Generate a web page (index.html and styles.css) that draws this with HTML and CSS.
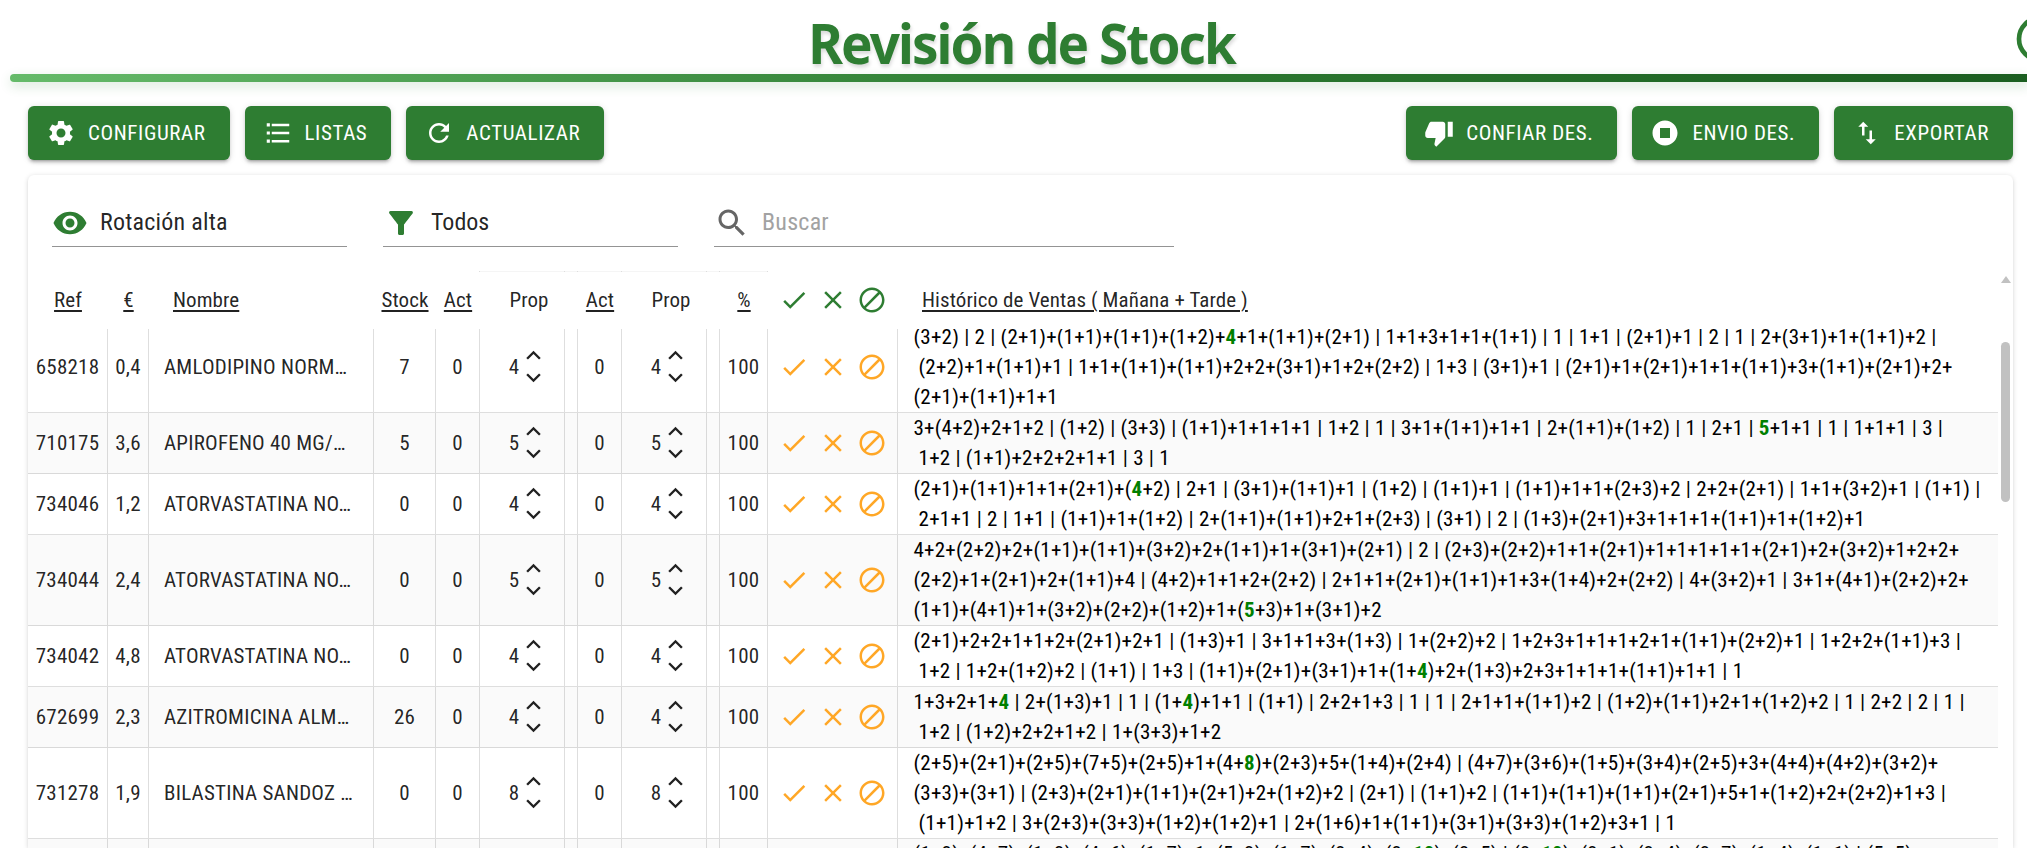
FILE: index.html
```html
<!DOCTYPE html>
<html lang="es">
<head>
    <meta charset="UTF-8">
    <meta name="viewport" content="width=device-width, initial-scale=1.0">
    <title>Revisión de Stock</title>
    <link rel="stylesheet" href="styles.css">
</head>
<body>
    <svg class="sprite">
        <symbol id="check" viewBox="0 0 24 24"><path d="M9 16.17 4.83 12l-1.42 1.41L9 19 21 7l-1.41-1.41z"/></symbol>
        <symbol id="clear" viewBox="0 0 24 24"><path d="M19 6.41 17.59 5 12 10.59 6.41 5 5 6.41 10.59 12 5 17.59 6.41 19 12 13.41 17.59 19 19 17.59 13.41 12z"/></symbol>
        <symbol id="block" viewBox="0 0 24 24"><path d="M12 2C6.5 2 2 6.5 2 12s4.500 10 10 10 10-4.500 10-10S17.500 2 12 2zM4 12c0-4.400 3.600-8 8-8 1.850 0 3.550.63 4.900 1.690L5.690 16.900C4.630 15.550 4 13.850 4 12zm8 8c-1.850 0-3.550-.63-4.900-1.690L18.310 7.100C19.370 8.450 20 10.150 20 12c0 4.400-3.600 8-8 8z"/></symbol>
        <symbol id="up" viewBox="0 0 24 24"><path d="M7.410 15.410 12 10.830l4.590 4.580L18 14l-6-6-6 6z"/></symbol>
        <symbol id="down" viewBox="0 0 24 24"><path d="M7.410 8.590 12 13.170l4.590-4.580L18 10l-6 6-6-6z"/></symbol>
    </svg>

    <header class="header">
        <h1>Revisión de Stock</h1>
        <svg class="help" viewBox="0 0 24 24"><circle cx="12" cy="12" r="9"/></svg>
    </header>
    <div class="bar"></div>

    <main class="content">
        <div class="toolbar">
            <button class="btn"><svg viewBox="0 0 24 24"><path d="M19.140 12.940c.04-.3.06-.61.06-.94 0-.32-.02-.64-.07-.94l2.030-1.580c.18-.14.23-.41.12-.61l-1.920-3.320c-.12-.22-.37-.29-.59-.22l-2.390.96c-.5-.38-1.030-.7-1.620-.94l-.36-2.540c-.04-.24-.24-.41-.48-.41h-3.840c-.24 0-.43.17-.47.41l-.36 2.540c-.59.24-1.130.57-1.620.94l-2.390-.96c-.22-.08-.47 0-.59.22L2.740 8.870c-.12.21-.08.47.12.61l2.030 1.580c-.05.3-.09.63-.09.94s.02.64.07.94l-2.030 1.580c-.18.14-.23.41-.12.61l1.920 3.320c.12.22.37.29.59.22l2.390-.96c.5.38 1.030.7 1.620.94l.36 2.540c.05.24.24.41.48.41h3.840c.24 0 .44-.17.47-.41l.36-2.540c.59-.24 1.130-.56 1.620-.94l2.390.96c.22.08.47 0 .59-.22l1.920-3.320c.12-.22.07-.47-.12-.61l-2.010-1.580zM12 15.600c-1.980 0-3.600-1.620-3.600-3.600s1.620-3.600 3.600-3.600 3.600 1.620 3.600 3.600-1.620 3.600-3.600 3.600z"/></svg>CONFIGURAR</button>
            <button class="btn"><svg viewBox="0 0 24 24"><path d="M3 10.750h2.500v2.500H3zM3 4.250h2.500v2.500H3zM3 17.250h2.500v2.500H3zM7 4.500h14v2H7zM7 11h14v2H7zM7 17.500h14v2H7z"/></svg>LISTAS</button>
            <button class="btn"><svg viewBox="0 0 24 24"><path d="M17.650 6.350C16.200 4.900 14.210 4 12 4c-4.420 0-7.990 3.580-7.990 8s3.570 8 7.990 8c3.730 0 6.840-2.550 7.730-6h-2.080c-.82 2.330-3.040 4-5.650 4-3.310 0-6-2.690-6-6s2.690-6 6-6c1.660 0 3.140.69 4.220 1.780L13 11h7V4l-2.350 2.350z"/></svg>ACTUALIZAR</button>
            <span class="spacer"></span>
            <button class="btn"><svg viewBox="0 0 24 24"><path d="M15 3H6c-.83 0-1.540.5-1.840 1.220l-3.020 7.050c-.09.23-.14.47-.14.73v2c0 1.100.9 2 2 2h6.310l-.95 4.570-.03.32c0 .41.17.79.44 1.060L9.830 23l6.590-6.590c.36-.36.58-.86.58-1.410V5c0-1.100-.9-2-2-2zm4 0v12h4V3h-4z"/></svg>CONFIAR DES.</button>
            <button class="btn"><svg viewBox="0 0 24 24"><path d="M12 2C6.480 2 2 6.480 2 12s4.480 10 10 10 10-4.480 10-10S17.520 2 12 2zm4 14H8V8h8v8z"/></svg>ENVIO DES.</button>
            <button class="btn"><svg viewBox="0 0 24 24"><path d="M16 17.010V10h-2v7.010h-3L15 21l4-3.990h-3zM9 3 5 6.990h3V14h2V6.990h3L9 3z"/></svg>EXPORTAR</button>
        </div>

        <section class="card">
            <div class="filters">
                <div class="field">
                    <svg viewBox="0 0 24 24"><path d="M12 4.500C7 4.500 2.730 7.610 1 12c1.730 4.390 6 7.500 11 7.500s9.270-3.110 11-7.500c-1.730-4.390-6-7.500-11-7.500zM12 17c-2.760 0-5-2.240-5-5s2.240-5 5-5 5 2.240 5 5-2.240 5-5 5zm0-8c-1.660 0-3 1.340-3 3s1.340 3 3 3 3-1.340 3-3-1.340-3-3-3z"/></svg>
                    <span>Rotación alta</span>
                </div>
                <div class="field">
                    <svg viewBox="0 0 24 24"><path d="M4.250 5.610C6.270 8.200 10 13 10 13v6c0 .55.45 1 1 1h2c.55 0 1-.45 1-1v-6s3.720-4.800 5.740-7.390c.51-.66.04-1.610-.79-1.610H5.040c-.83 0-1.300.95-.79 1.610z"/></svg>
                    <span>Todos</span>
                </div>
                <div class="field search">
                    <svg viewBox="0 0 24 24"><path d="M15.500 14h-.79l-.28-.27C15.410 12.590 16 11.110 16 9.500 16 5.910 13.090 3 9.500 3S3 5.910 3 9.500 5.910 16 9.500 16c1.610 0 3.090-.59 4.230-1.570l.27.28v.79l5 4.990L20.490 19l-4.990-5zm-6 0C7.010 14 5 11.990 5 9.500S7.010 5 9.500 5 14 7.010 14 9.500 11.990 14 9.500 14z"/></svg>
                    <span>Buscar</span>
                </div>
            </div>

            <div class="table-wrap">
                <div class="tables">
                    <table class="head">
                        <colgroup><col class="w-ref"><col class="w-eur"><col class="w-name"><col class="w-stock"><col class="w-act"><col class="w-prop"><col class="w-gap"><col class="w-act"><col class="w-prop"><col class="w-gap"><col class="w-pct"><col class="w-icons"><col></colgroup>
                        <tr class="edge"><td colspan="4"></td><td class="line"></td><td class="line"></td><td class="line"></td><td class="line"></td><td class="line"></td><td class="line"></td><td class="line"></td><td colspan="2"></td></tr>
                        <tr>
                            <th><u>Ref</u></th>
                            <th><u>€</u></th>
                            <th class="name"><u>Nombre</u></th>
                            <th><u>Stock</u></th>
                            <th><u>Act</u></th>
                            <th colspan="2">Prop</th>
                            <th><u>Act</u></th>
                            <th colspan="2">Prop</th>
                            <th><u>%</u></th>
                            <th><div class="icons"><svg><use href="#check"/></svg><svg><use href="#clear"/></svg><svg><use href="#block"/></svg></div></th>
                            <th class="hist"><u>Histórico de Ventas ( Mañana + Tarde )</u></th>
                        </tr>
                    </table>
                    <div class="rows">
                        <table class="body">
                            <colgroup><col class="w-ref"><col class="w-eur"><col class="w-name"><col class="w-stock"><col class="w-act"><col class="w-prop"><col class="w-gap"><col class="w-act"><col class="w-prop"><col class="w-gap"><col class="w-pct"><col class="w-icons"><col></colgroup>
                            <tr>
                                <td>658218</td><td>0,4</td><td class="name">AMLODIPINO NORM…</td><td>7</td><td>0</td>
                                <td><div class="prop">4<span><svg><use href="#up"/></svg><svg><use href="#down"/></svg></span></div></td><td></td><td>0</td>
                                <td><div class="prop">4<span><svg><use href="#up"/></svg><svg><use href="#down"/></svg></span></div></td><td></td><td>100</td>
                                <td><div class="icons"><svg><use href="#check"/></svg><svg><use href="#clear"/></svg><svg><use href="#block"/></svg></div></td>
                                <td class="hist">(3+2) | 2 | (2+1)+(1+1)+(1+1)+(1+2)+<b>4</b>+1+(1+1)+(2+1) | 1+1+3+1+1+(1+1) | 1 | 1+1 | (2+1)+1 | 2 | 1 | 2+(3+1)+1+(1+1)+2 |<br>&nbsp;(2+2)+1+(1+1)+1 | 1+1+(1+1)+(1+1)+2+2+(3+1)+1+2+(2+2) | 1+3 | (3+1)+1 | (2+1)+1+(2+1)+1+1+(1+1)+3+(1+1)+(2+1)+2+<br>(2+1)+(1+1)+1+1</td>
                            </tr>
                            <tr>
                                <td>710175</td><td>3,6</td><td class="name">APIROFENO 40 MG/…</td><td>5</td><td>0</td>
                                <td><div class="prop">5<span><svg><use href="#up"/></svg><svg><use href="#down"/></svg></span></div></td><td></td><td>0</td>
                                <td><div class="prop">5<span><svg><use href="#up"/></svg><svg><use href="#down"/></svg></span></div></td><td></td><td>100</td>
                                <td><div class="icons"><svg><use href="#check"/></svg><svg><use href="#clear"/></svg><svg><use href="#block"/></svg></div></td>
                                <td class="hist">3+(4+2)+2+1+2 | (1+2) | (3+3) | (1+1)+1+1+1+1 | 1+2 | 1 | 3+1+(1+1)+1+1 | 2+(1+1)+(1+2) | 1 | 2+1 | <b>5</b>+1+1 | 1 | 1+1+1 | 3 |<br>&nbsp;1+2 | (1+1)+2+2+2+1+1 | 3 | 1</td>
                            </tr>
                            <tr>
                                <td>734046</td><td>1,2</td><td class="name">ATORVASTATINA NO…</td><td>0</td><td>0</td>
                                <td><div class="prop">4<span><svg><use href="#up"/></svg><svg><use href="#down"/></svg></span></div></td><td></td><td>0</td>
                                <td><div class="prop">4<span><svg><use href="#up"/></svg><svg><use href="#down"/></svg></span></div></td><td></td><td>100</td>
                                <td><div class="icons"><svg><use href="#check"/></svg><svg><use href="#clear"/></svg><svg><use href="#block"/></svg></div></td>
                                <td class="hist">(2+1)+(1+1)+1+1+(2+1)+(<b>4</b>+2) | 2+1 | (3+1)+(1+1)+1 | (1+2) | (1+1)+1 | (1+1)+1+1+(2+3)+2 | 2+2+(2+1) | 1+1+(3+2)+1 | (1+1) |<br>&nbsp;2+1+1 | 2 | 1+1 | (1+1)+1+(1+2) | 2+(1+1)+(1+1)+2+1+(2+3) | (3+1) | 2 | (1+3)+(2+1)+3+1+1+1+(1+1)+1+(1+2)+1</td>
                            </tr>
                            <tr>
                                <td>734044</td><td>2,4</td><td class="name">ATORVASTATINA NO…</td><td>0</td><td>0</td>
                                <td><div class="prop">5<span><svg><use href="#up"/></svg><svg><use href="#down"/></svg></span></div></td><td></td><td>0</td>
                                <td><div class="prop">5<span><svg><use href="#up"/></svg><svg><use href="#down"/></svg></span></div></td><td></td><td>100</td>
                                <td><div class="icons"><svg><use href="#check"/></svg><svg><use href="#clear"/></svg><svg><use href="#block"/></svg></div></td>
                                <td class="hist">4+2+(2+2)+2+(1+1)+(1+1)+(3+2)+2+(1+1)+1+(3+1)+(2+1) | 2 | (2+3)+(2+2)+1+1+(2+1)+1+1+1+1+1+(2+1)+2+(3+2)+1+2+2+<br>(2+2)+1+(2+1)+2+(1+1)+4 | (4+2)+1+1+2+(2+2) | 2+1+1+(2+1)+(1+1)+1+3+(1+4)+2+(2+2) | 4+(3+2)+1 | 3+1+(4+1)+(2+2)+2+<br>(1+1)+(4+1)+1+(3+2)+(2+2)+(1+2)+1+(<b>5</b>+3)+1+(3+1)+2</td>
                            </tr>
                            <tr>
                                <td>734042</td><td>4,8</td><td class="name">ATORVASTATINA NO…</td><td>0</td><td>0</td>
                                <td><div class="prop">4<span><svg><use href="#up"/></svg><svg><use href="#down"/></svg></span></div></td><td></td><td>0</td>
                                <td><div class="prop">4<span><svg><use href="#up"/></svg><svg><use href="#down"/></svg></span></div></td><td></td><td>100</td>
                                <td><div class="icons"><svg><use href="#check"/></svg><svg><use href="#clear"/></svg><svg><use href="#block"/></svg></div></td>
                                <td class="hist">(2+1)+2+2+1+1+2+(2+1)+2+1 | (1+3)+1 | 3+1+1+3+(1+3) | 1+(2+2)+2 | 1+2+3+1+1+1+2+1+(1+1)+(2+2)+1 | 1+2+2+(1+1)+3 |<br>&nbsp;1+2 | 1+2+(1+2)+2 | (1+1) | 1+3 | (1+1)+(2+1)+(3+1)+1+(1+<b>4</b>)+2+(1+3)+2+3+1+1+1+(1+1)+1+1 | 1</td>
                            </tr>
                            <tr>
                                <td>672699</td><td>2,3</td><td class="name">AZITROMICINA ALM…</td><td>26</td><td>0</td>
                                <td><div class="prop">4<span><svg><use href="#up"/></svg><svg><use href="#down"/></svg></span></div></td><td></td><td>0</td>
                                <td><div class="prop">4<span><svg><use href="#up"/></svg><svg><use href="#down"/></svg></span></div></td><td></td><td>100</td>
                                <td><div class="icons"><svg><use href="#check"/></svg><svg><use href="#clear"/></svg><svg><use href="#block"/></svg></div></td>
                                <td class="hist">1+3+2+1+<b>4</b> | 2+(1+3)+1 | 1 | (1+<b>4</b>)+1+1 | (1+1) | 2+2+1+3 | 1 | 1 | 2+1+1+(1+1)+2 | (1+2)+(1+1)+2+1+(1+2)+2 | 1 | 2+2 | 2 | 1 |<br>&nbsp;1+2 | (1+2)+2+2+1+2 | 1+(3+3)+1+2</td>
                            </tr>
                            <tr>
                                <td>731278</td><td>1,9</td><td class="name">BILASTINA SANDOZ …</td><td>0</td><td>0</td>
                                <td><div class="prop">8<span><svg><use href="#up"/></svg><svg><use href="#down"/></svg></span></div></td><td></td><td>0</td>
                                <td><div class="prop">8<span><svg><use href="#up"/></svg><svg><use href="#down"/></svg></span></div></td><td></td><td>100</td>
                                <td><div class="icons"><svg><use href="#check"/></svg><svg><use href="#clear"/></svg><svg><use href="#block"/></svg></div></td>
                                <td class="hist">(2+5)+(2+1)+(2+5)+(7+5)+(2+5)+1+(4+<b>8</b>)+(2+3)+5+(1+4)+(2+4) | (4+7)+(3+6)+(1+5)+(3+4)+(2+5)+3+(4+4)+(4+2)+(3+2)+<br>(3+3)+(3+1) | (2+3)+(2+1)+(1+1)+(2+1)+2+(1+2)+2 | (2+1) | (1+1)+2 | (1+1)+(1+1)+(1+1)+(2+1)+5+1+(1+2)+2+(2+2)+1+3 |<br>&nbsp;(1+1)+1+2 | 3+(2+3)+(3+3)+(1+2)+(1+2)+1 | 2+(1+6)+1+(1+1)+(3+1)+(3+3)+(1+2)+3+1 | 1</td>
                            </tr>
                            <tr>
                                <td></td><td></td><td></td><td></td><td></td><td></td><td></td><td></td><td></td><td></td><td></td><td></td>
                                <td class="hist">(1+3)+(4+7)+(1+3)+(4+6)+(1+7)+1+(5+3)+(1+7)+(3+4)+(3+<b>10</b>)+(3+5) | (3+<b>10</b>)+(3+1)+(3+4)+(3+7)+(1+4)+(1+1) | (5+5)+</td>
                            </tr>
                        </table>
                    </div>
                </div>
                <div class="scrollbar">
                    <span class="arrow"></span>
                    <span class="thumb"></span>
                </div>
            </div>
        </section>
    </main>
</body>
</html>
```
FILE: styles.css
```css
:root {
    --green: #2e7d32;
    --orange: #ffa726;
    --border: rgba(0, 0, 0, 0.13);
    --text: rgba(0, 0, 0, 0.87);
}

* {
    margin: 0;
    padding: 0;
    box-sizing: border-box;
}

html, body {
    height: 100%;
    overflow: hidden;
}

body {
    display: flex;
    flex-direction: column;
    font-family: "Roboto Condensed", Roboto, sans-serif;
    font-stretch: 75%;
    font-size: 21px;
    line-height: 1.43;
    letter-spacing: 0.01071em;
    color: var(--text);
    background: #fff;
}

.sprite {
    display: none;
}

svg {
    display: block;
    fill: currentColor;
    flex-shrink: 0;
}

.header {
    position: relative;
    flex-shrink: 0;
    height: 74px;
    padding-left: 16px;
    text-align: center;
}

h1 {
    display: inline-block;
    padding-top: 6px;
    font-family: "Segoe UI", "Noto Sans", sans-serif;
    font-stretch: normal;
    font-size: 55px;
    font-weight: 700;
    line-height: 74px;
    letter-spacing: -2px;
    color: var(--green);
    text-shadow: 1px 3px 4px rgba(0, 0, 0, 0.15);
    transform: scaleX(0.963);
}

.help {
    position: absolute;
    left: 2012px;
    top: 11px;
    width: 56px;
    height: 56px;
    fill: none;
    stroke: var(--green);
    stroke-width: 2;
}

.bar {
    flex-shrink: 0;
    width: 2020px;
    height: 8px;
    margin-left: 10px;
    border-radius: 4px;
    background: linear-gradient(135deg, #66bb6a 0%, #2e7d32 50%, #1b5e20 100%);
    box-shadow: 0 4px 12px rgba(46, 125, 50, 0.2);
}

.content {
    display: flex;
    flex: 1;
    flex-direction: column;
    min-height: 0;
    padding: 24px 14px 0 28px;
}

.toolbar {
    display: flex;
    gap: 15px;
}

.spacer {
    flex: 1;
}

.btn {
    display: flex;
    align-items: center;
    height: 54px;
    padding: 0 24px 0 18px;
    border: none;
    border-radius: 6px;
    background: var(--green);
    color: #fff;
    font: inherit;
    font-stretch: 75%;
    letter-spacing: 0.02857em;
    box-shadow: 0 4px 2px -3px rgba(0, 0, 0, 0.2), 0 3px 3px rgba(0, 0, 0, 0.14), 0 1px 7px rgba(0, 0, 0, 0.12);
}

.btn svg {
    width: 30px;
    height: 30px;
    margin-right: 12px;
}

.card {
    display: flex;
    flex: 1;
    flex-direction: column;
    min-height: 0;
    margin-top: 15px;
    border-radius: 6px 6px 0 0;
    box-shadow: 0 3px 1px -2px rgba(0, 0, 0, 0.1), 0 1px 1px rgba(0, 0, 0, 0.1), 0 1px 5px rgba(0, 0, 0, 0.16);
}

.filters {
    display: flex;
    flex-shrink: 0;
    gap: 36px;
    height: 96px;
    padding: 24px 24px 0;
}

.field {
    display: flex;
    align-items: center;
    width: 295px;
    height: 48px;
    border-bottom: 1px solid #949494;
    font-size: 24px;
    letter-spacing: 0.00938em;
}

.field svg {
    width: 36px;
    height: 36px;
    margin-right: 12px;
    color: var(--green);
}

.field:nth-child(2) {
    letter-spacing: 0;
}

.search {
    width: 460px;
    color: #a2a2a2;
}

.search svg {
    color: #666;
}

.table-wrap {
    display: flex;
    flex: 1;
    min-height: 0;
    overflow: hidden;
}

.tables {
    width: 1970px;
}

table {
    width: 100%;
    table-layout: fixed;
    border-collapse: separate;
    border-spacing: 0;
}

.w-ref { width: 80px; }
.w-eur { width: 41px; }
.w-name { width: 225px; }
.w-stock { width: 62px; }
.w-act { width: 44px; }
.w-prop { width: 85px; }
.w-gap { width: 13px; }
.w-pct { width: 48px; }
.w-icons { width: 130px; }

.edge td {
    height: 1px;
}

.edge .line {
    background: #f5f5f5;
    border-right: 1px solid #ddd;
}

.edge .line:nth-child(2) {
    background: none;
}

th {
    height: 57px;
    font-weight: 400;
    letter-spacing: 0.004em;
    white-space: nowrap;
}

u {
    text-decoration-thickness: 2px;
    text-underline-offset: 3px;
}

.head .name {
    padding-left: 24px;
    text-align: left;
}

.head .hist {
    padding-left: 24px;
    text-align: left;
}

.head .icons {
    padding: 0 1px 2px 0;
    color: var(--green);
}

.rows {
    overflow: hidden;
}

/* first row is scrolled slightly under the header */
.body {
    margin-top: -7px;
}

.body td {
    border-right: 1px solid var(--border);
    border-bottom: 1px solid var(--border);
    text-align: center;
    vertical-align: middle;
}

.body tr:nth-child(even) {
    background: #fafafa;
}

.body .name {
    padding-left: 15px;
    text-align: left;
    white-space: nowrap;
}

.body .hist {
    padding-left: 15.5px;
    border-right: none;
    text-align: left;
    white-space: nowrap;
    color: #000;
}

.hist b {
    color: green;
}

.prop {
    display: flex;
    align-items: center;
    justify-content: center;
    height: 58px;
    padding: 0 0 1px 13px;
}

.prop svg {
    width: 29px;
    height: 29px;
}

.prop svg + svg {
    margin-top: -7px;
}

.icons {
    display: flex;
    justify-content: center;
    gap: 9px;
    color: var(--orange);
}

.icons svg {
    width: 30px;
    height: 30px;
}

.scrollbar {
    width: 15px;
    padding: 5px 3px 0;
}

.arrow {
    display: block;
    width: 10px;
    height: 7px;
    background: #c1c1c1;
    clip-path: polygon(50% 0, 100% 100%, 0 100%);
}

.thumb {
    display: block;
    width: 9px;
    height: 160px;
    margin-top: 59px;
    border-radius: 5px;
    background: #c1c1c1;
}
```
